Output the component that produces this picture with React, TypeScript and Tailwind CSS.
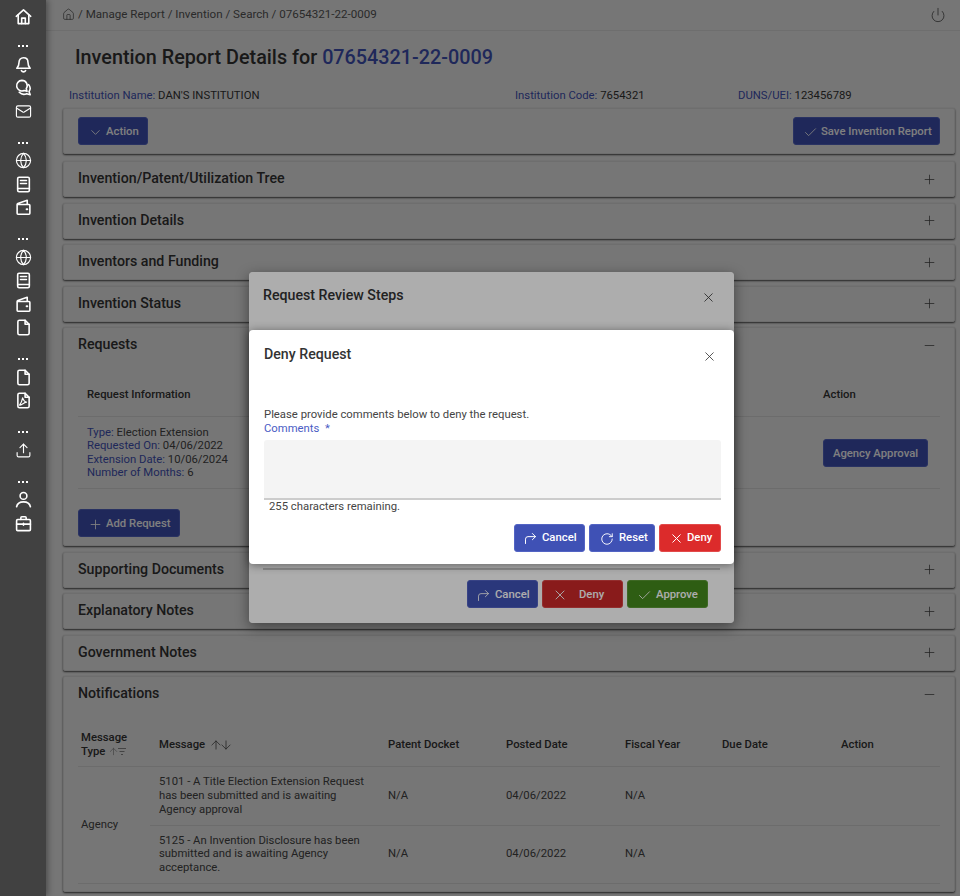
import type { ReactNode } from "react";
import {
  ArrowDown,
  ArrowUp,
  Check,
  ChevronDown,
  CornerUpRight,
  Globe,
  Home,
  Mail,
  Minus,
  Plus,
  Power,
  RotateCw,
  Upload,
  X,
} from "lucide-react";

function Svg({ children }: { children: ReactNode }) {
  return (
    <svg
      width="17"
      height="17"
      viewBox="0 0 16 16"
      fill="none"
      stroke="currentColor"
      strokeWidth="1.5"
      strokeLinecap="round"
      strokeLinejoin="round"
    >
      {children}
    </svg>
  );
}

const BellIcon = () => (
  <Svg>
    <path d="M8 1.600c-2.600 0-4.200 1.900-4.200 4.300 0 3-.7 4.400-2.100 5.700h12.600c-1.400-1.300-2.100-2.700-2.100-5.700 0-2.400-1.600-4.300-4.200-4.300z" />
    <path d="M6 13.800c.5.8 1.200 1.100 2 1.100s1.500-.3 2-1.100" />
  </Svg>
);
const ChatIcon = () => (
  <Svg>
    <path d="M6.500 1.300a5 5 0 1 0 2.200 9.500l2.600.8-.7-2.500A5 5 0 0 0 6.500 1.300z" />
    <path d="M12.900 5.300c1.700 2.100 1.600 4.700.3 6.500l1.100 3-3.300-1c-2.300 1-5.200.5-7-1.300" />
  </Svg>
);
const BookIcon = () => (
  <Svg>
    <rect x="2.500" y="1.200" width="11" height="13.600" rx="1.300" />
    <path d="M2.500 11.800h11M5.200 4.300h5.600M5.200 7h5.600" />
  </Svg>
);
const WalletIcon = () => (
  <Svg>
    <path d="M2 5.200h11.200c.5 0 .8.300.8.800v7.500c0 .5-.3.800-.8.800H2.800c-.5 0-.8-.3-.8-.8V5.200zm0 0c0-.5.300-.8.700-1l8.800-3v4" />
    <path d="M11 9.700h.5" strokeWidth="2" />
  </Svg>
);
const FileIcon = () => (
  <Svg>
    <path d="M9.500 1.200H4.200c-.9 0-1.500.6-1.500 1.500v10.600c0 .9.600 1.500 1.500 1.500h7.600c.9 0 1.500-.6 1.500-1.500V5z" />
    <path d="M9.500 1.200V5h3.800" />
  </Svg>
);
const PdfIcon = () => (
  <Svg>
    <path d="M9.500 1.200H4.200c-.9 0-1.500.6-1.500 1.500v10.600c0 .9.600 1.500 1.500 1.500h7.600c.9 0 1.500-.6 1.500-1.500V5z" />
    <path d="M9.500 1.200V5h3.800" />
    <path d="M7.200 5.500c-.5 2.500-1.300 5-3 6.800 1.500.5 4-2.500 6.600-2.700-2-.3-3-2.300-3.600-4.100z" strokeWidth="1.100" />
  </Svg>
);
const UserIcon = () => (
  <Svg>
    <circle cx="8" cy="4.600" r="3.200" />
    <path d="M1.500 14.800c.6-3 3.200-4.600 6.500-4.600s5.900 1.600 6.500 4.600" />
  </Svg>
);
const CaseIcon = () => (
  <Svg>
    <rect x="1.500" y="4.300" width="13" height="10.400" rx="1" />
    <path d="M5.500 4.300V2.500c0-.5.300-.9.900-.9h3.200c.6 0 .9.400.9.900v1.800M1.500 8.600h13M8 7.800v1.800" />
  </Svg>
);
const HomeIcon = () => (
  <Svg>
    <path d="M1.200 7.800 8 1.700l6.800 6.100" />
    <path d="M3 6.500v8.200h10V6.500" />
    <path d="M6.300 14.700V9.500h3.400v5.200" />
  </Svg>
);
const GlobeIcon = () => <Globe size={17} strokeWidth={1.6} />;
const MailIcon = () => <Mail size={17} strokeWidth={1.6} />;
const UploadIcon = () => <Upload size={17} strokeWidth={1.6} />;

const navGroups = [
  [BellIcon, ChatIcon, MailIcon],
  [GlobeIcon, BookIcon, WalletIcon],
  [GlobeIcon, BookIcon, WalletIcon, FileIcon],
  [FileIcon, PdfIcon],
  [UploadIcon],
  [UserIcon, CaseIcon],
];

function Sidebar() {
  return (
    <aside className="relative z-30 flex w-[46px] shrink-0 flex-col items-center bg-[#414141] pt-[8px] text-white shadow-[2px_0_6px_rgba(0,0,0,0.35)]">
      <div className="mb-[1.5px]">
        <HomeIcon />
      </div>
      {navGroups.map((group, i) => (
        <div key={i} className="flex flex-col items-center">
          <div className="mt-[13.5px] mb-[0.5px] flex h-[12px] items-center gap-[2px]">
            <span className="h-[2px] w-[2px] bg-white" />
            <span className="h-[2px] w-[2px] bg-white" />
            <span className="h-[2px] w-[2px] bg-white" />
          </div>
          <div className="flex flex-col items-center">
            {group.map((Icon, j) => (
              <div key={j} className="flex h-[23.5px] items-center justify-center">
                <Icon />
              </div>
            ))}
          </div>
        </div>
      ))}
    </aside>
  );
}

function Btn({
  icon,
  children,
  color = "bg-[#3f51b5] border-[#5364c4]",
  className = "",
}: {
  icon: ReactNode;
  children: ReactNode;
  color?: string;
  className?: string;
}) {
  return (
    <button
      className={`flex h-[28px] items-center rounded-[3px] border px-[9px] pt-[2px] text-[11.3px] font-medium whitespace-nowrap text-white ${color} ${className}`}
    >
      {icon}
      {children}
    </button>
  );
}

function Card({ children, className = "" }: { children: ReactNode; className?: string }) {
  return (
    <div
      className={`rounded-[2px] border border-[#dcdcdc] bg-[#ececec] shadow-[0_1px_2px_rgba(0,0,0,0.7)] ${className}`}
    >
      {children}
    </div>
  );
}

function SectionHead({ title, open = false }: { title: string; open?: boolean }) {
  return (
    <div className="flex h-[34px] items-center justify-between pr-[17px] pl-[14px]">
      <span className="text-[14.2px] font-medium text-[#333]">{title}</span>
      {open ? (
        <Minus size={15} strokeWidth={1.2} className="text-[#444]" />
      ) : (
        <Plus size={15} strokeWidth={1.2} className="text-[#444]" />
      )}
    </div>
  );
}

function Label({ children }: { children: ReactNode }) {
  return <span className="text-[#3f51b5]">{children}</span>;
}

function RequestsBody() {
  return (
    <div className="px-[14px] pt-[13px] pb-[8px] text-[11.3px] text-[#444]">
      <div className="flex h-[42px] items-center justify-between border-b border-[#d8d8d8] px-[9px] text-[#333]">
        <span className="font-medium">Request Information</span>
        <span className="w-[108px] font-medium">Action</span>
      </div>
      <div className="flex h-[72px] items-center justify-between border-b border-[#d8d8d8] px-[9px] leading-[13.5px]">
        <div>
          <div>
            <Label>Type:</Label> Election Extension
          </div>
          <div>
            <Label>Requested On:</Label> 04/06/2022
          </div>
          <div>
            <Label>Extension Date:</Label> 10/06/2024
          </div>
          <div>
            <Label>Number of Months:</Label> 6
          </div>
        </div>
        <Btn icon={null} className="mr-[3px] w-[105px] justify-center">
          Agency Approval
        </Btn>
      </div>
      <Btn icon={<Plus size={15} strokeWidth={1.4} className="mr-[3px] shrink-0" />} className="mt-[20px] w-[102px]">
        Add Request
      </Btn>
    </div>
  );
}

const notifications = [
  {
    text: "5101 - A Title Election Extension Request has been submitted and is awaiting Agency approval",
  },
  {
    text: "5125 - An Invention Disclosure has been submitted and is awaiting Agency acceptance.",
  },
];

function NotificationsBody() {
  const th = "pl-[9px] text-left font-medium text-[#333] border-b border-[#d8d8d8]";
  const td = "pl-[9px] border-b border-[#d8d8d8]";
  return (
    <div className="px-[14px] pt-[13px] text-[11.3px] text-[#444]">
      <table className="w-[862px] table-fixed border-collapse leading-[13.6px]">
        <colgroup>
          <col className="w-[72px]" />
          <col className="w-[229px]" />
          <col className="w-[118px]" />
          <col className="w-[119px]" />
          <col className="w-[97px]" />
          <col className="w-[119px]" />
          <col className="w-[108px]" />
        </colgroup>
        <thead>
          <tr className="h-[42.5px]">
            <th className="border-b border-[#d8d8d8] pl-[3px] text-left font-medium text-[#333]">
              Message
              <br />
              <span className="inline-flex items-center">
                Type
                <ArrowUp size={11} strokeWidth={1.5} className="ml-[3px] text-[#888]" />
                <svg width="8" height="9" viewBox="0 0 8 9" className="-ml-[1px] text-[#888]" fill="none" stroke="currentColor">
                  <path d="M0 1.500h8M1.500 4.500h5M3 7.500h2" />
                </svg>
              </span>
            </th>
            <th className={th}>
              <span className="inline-flex items-center">
                Message
                <ArrowUp size={14} strokeWidth={1.3} className="ml-[4px] -mr-[4px] text-[#444]" />
                <ArrowDown size={14} strokeWidth={1.3} className="text-[#444]" />
              </span>
            </th>
            <th className={th}>Patent Docket</th>
            <th className={th}>Posted Date</th>
            <th className={th}>Fiscal Year</th>
            <th className={th}>Due Date</th>
            <th className={th}>Action</th>
          </tr>
        </thead>
        <tbody>
          {notifications.map((n, i) => (
            <tr key={i} className="h-[58.5px]">
              {i === 0 && (
                <td rowSpan={2} className="border-b border-[#d8d8d8] pl-[3px]">
                  Agency
                </td>
              )}
              <td className={`${td} pr-[10px]`}>{n.text}</td>
              <td className={td}>N/A</td>
              <td className={td}>04/06/2022</td>
              <td className={td}>N/A</td>
              <td className={td} />
              <td className={td} />
            </tr>
          ))}
        </tbody>
      </table>
    </div>
  );
}

function ReviewModal() {
  return (
    <div className="absolute top-[272px] left-[249px] z-20 h-[351px] w-[485px] overflow-hidden rounded-[4px] bg-white shadow-[0_4px_14px_rgba(0,0,0,0.45)]">
      <div className="flex h-[46px] items-center justify-between pt-[2px] pr-[18px] pl-[14px]">
        <span className="text-[14.2px] font-medium text-[#333]">Request Review Steps</span>
        <X size={15} strokeWidth={1.3} className="mt-[3px] text-[#333]" />
      </div>
      <div className="mx-[14px] mt-[250px] border-b-2 border-[#ccc]" />
      <div className="mt-[10px] flex justify-end gap-[4px] pr-[26px]">
        <Btn icon={<CornerUpRight size={15} strokeWidth={1.4} className="mr-[4px] shrink-0" />} className="w-[71px] !px-[8px]">
          Cancel
        </Btn>
        <Btn
          icon={<X size={16} strokeWidth={1.4} className="mr-[11px] shrink-0" />}
          color="bg-[#cb2929] border-[#d94545]"
          className="w-[81px]"
        >
          Deny
        </Btn>
        <Btn
          icon={<Check size={15} strokeWidth={1.4} className="mr-[4px] shrink-0" />}
          color="bg-[#458a1c] border-[#5c9a36]"
          className="w-[81px]"
        >
          Approve
        </Btn>
      </div>
      <div className="absolute inset-0 bg-black/32" />
    </div>
  );
}

function DenyModal() {
  return (
    <div className="absolute top-[330px] left-[249px] z-20 h-[234px] w-[485px] rounded-[4px] bg-white px-[15px] shadow-[0_1px_10px_rgba(0,0,0,0.45)]">
      <div className="flex h-[48px] items-center justify-between pt-[2px]">
        <span className="text-[14.2px] font-medium text-[#333]">Deny Request</span>
        <X size={15} strokeWidth={1.3} className="mt-[3px] mr-[2px] text-[#333]" />
      </div>
      <div className="mt-[30px] text-[11.3px] leading-[13.5px] text-[#444]">
        Please provide comments below to deny the request.
      </div>
      <div className="text-[11.3px] leading-[13.5px] text-[#4a5cc4]">Comments &nbsp;*</div>
      <div className="mt-[5px] h-[60px] w-[457px] rounded-t-[3px] border-b-2 border-[#ccc] bg-[#f4f4f4]" />
      <div className="pl-[5px] text-[11.3px] leading-[13.5px] text-[#444]">255 characters remaining.</div>
      <div className="mt-[10px] mr-[-2px] flex justify-end gap-[4px]">
        <Btn icon={<CornerUpRight size={15} strokeWidth={1.6} className="mr-[4px] shrink-0" />} className="w-[71px] !px-[8px]">
          Cancel
        </Btn>
        <Btn icon={<RotateCw size={14} strokeWidth={1.6} className="mr-[5px] shrink-0" />} className="w-[66px] !px-[10px]">
          Reset
        </Btn>
        <Btn
          icon={<X size={15} strokeWidth={1.6} className="mr-[3px] shrink-0" />}
          color="bg-[#dc2b2b] border-[#e24a4a]"
          className="w-[62px] !px-[9px]"
        >
          Deny
        </Btn>
      </div>
    </div>
  );
}

export default function App() {
  return (
    <div className="relative flex h-[896px] w-[960px] overflow-hidden bg-[#ededed] font-['Roboto',sans-serif]">
      <Sidebar />
      <main className="min-w-0 flex-1">
        <div className="flex h-[31px] items-center justify-between border-b border-[#dcdcdc] pr-[14px] pl-[16px] text-[11.6px] text-[#555]">
          <div className="flex items-center gap-[3px]">
            <Home size={13} strokeWidth={1.4} />
            <span>/ Manage Report / Invention / Search / 07654321-22-0009</span>
          </div>
          <Power size={16} strokeWidth={1.3} />
        </div>
        <h1 className="flex h-[53px] items-center pl-[29px] text-[19.8px] font-medium text-[#333]">
          Invention Report Details for&nbsp;<span className="text-[#3f51b5]">07654321-22-0009</span>
        </h1>
        <div className="ml-[17px] w-[892px]">
          <div className="flex h-[24px] items-center rounded-t-[2px] pl-[6px] text-[11.3px] text-[#333]">
            <div className="w-[446px]">
              <Label>Institution Name:</Label> DAN'S INSTITUTION
            </div>
            <div className="w-[223px]">
              <Label>Institution Code:</Label> 7654321
            </div>
            <div>
              <Label>DUNS/UEI:</Label> 123456789
            </div>
          </div>
          <Card className="flex h-[46px] items-center justify-between px-[14px]">
            <Btn icon={<ChevronDown size={15} strokeWidth={1.4} className="mr-[3px] shrink-0" />} className="w-[70px]">
              Action
            </Btn>
            <Btn icon={<Check size={15} strokeWidth={1.4} className="mr-[3px] shrink-0" />} className="w-[147px]">
              Save Invention Report
            </Btn>
          </Card>
          <div className="mt-[7px] flex flex-col gap-[5.5px]">
            <Card>
              <SectionHead title="Invention/Patent/Utilization Tree" />
            </Card>
            <Card>
              <SectionHead title="Invention Details" />
            </Card>
            <Card>
              <SectionHead title="Inventors and Funding" />
            </Card>
            <Card>
              <SectionHead title="Invention Status" />
            </Card>
            <Card>
              <SectionHead title="Requests" open />
              <RequestsBody />
            </Card>
            <Card>
              <SectionHead title="Supporting Documents" />
            </Card>
            <Card>
              <SectionHead title="Explanatory Notes" />
            </Card>
            <Card>
              <SectionHead title="Government Notes" />
            </Card>
            <Card className="h-[216px]">
              <SectionHead title="Notifications" open />
              <NotificationsBody />
            </Card>
          </div>
        </div>
      </main>
      <div className="absolute inset-0 z-10 bg-black/50" />
      <ReviewModal />
      <DenyModal />
    </div>
  );
}
